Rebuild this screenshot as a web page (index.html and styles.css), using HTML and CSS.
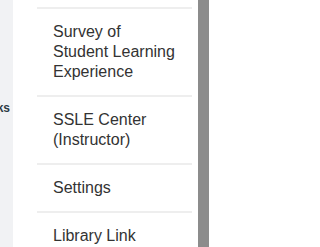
FILE: index.html
```html
<!DOCTYPE html>
<html lang="en">
<head>
<meta charset="utf-8">
<title>Courses tray</title>
<link rel="stylesheet" href="styles.css">
</head>
<body>
<div class="layout">
  <nav class="global-nav">
    <span class="nav-label">Links</span>
  </nav>
  <section class="tray">
    <ul class="tray-list">
      <li class="tray-item"><a href="#">Survey of Student Learning Experience</a></li>
      <li class="tray-item"><a href="#">SSLE Center (Instructor)</a></li>
      <li class="tray-item"><a href="#">Settings</a></li>
      <li class="tray-item"><a href="#">Library Link</a></li>
    </ul>
  </section>
  <div class="scrollbar"><div class="thumb"></div></div>
  <div class="page"></div>
</div>
</body>
</html>
```

FILE: styles.css
```css
html, body {
  margin: 0;
  padding: 0;
  background: #ffffff;
  height: 100%;
  overflow: hidden;
}
.layout {
  display: flex;
  height: 247px;
  font-family: "Liberation Sans", Arial, sans-serif;
}
.global-nav {
  width: 13px;
  flex: none;
  background: #f1f2f4;
  overflow: hidden;
  display: flex;
  justify-content: flex-end;
  align-items: flex-start;
  padding-top: 101px;
  box-sizing: border-box;
}
.nav-label {
  font-size: 12px;
  font-weight: bold;
  color: #2d3b45;
  white-space: nowrap;
  padding-right: 3px;
}
.tray {
  width: 185px;
  flex: none;
  background: #ffffff;
  box-sizing: border-box;
  padding: 0 6px 0 24px;
  overflow: hidden;
}
.tray-list {
  list-style: none;
  margin: 0;
  padding: 0;
  margin-top: 7px;
}
.tray-item {
  border-top: 2px solid #eeeeee;
  padding: 13px 16px 13px 16px;
  font-size: 16px;
  line-height: 20px;
}
.tray-item a {
  color: #333333;
  text-decoration: none;
}
.scrollbar {
  width: 11px;
  flex: none;
  background: #ffffff;
}
.thumb {
  background: #8c8c8c;
  height: 100%;
}
.page {
  flex: 1;
  background: #ffffff;
}
```
